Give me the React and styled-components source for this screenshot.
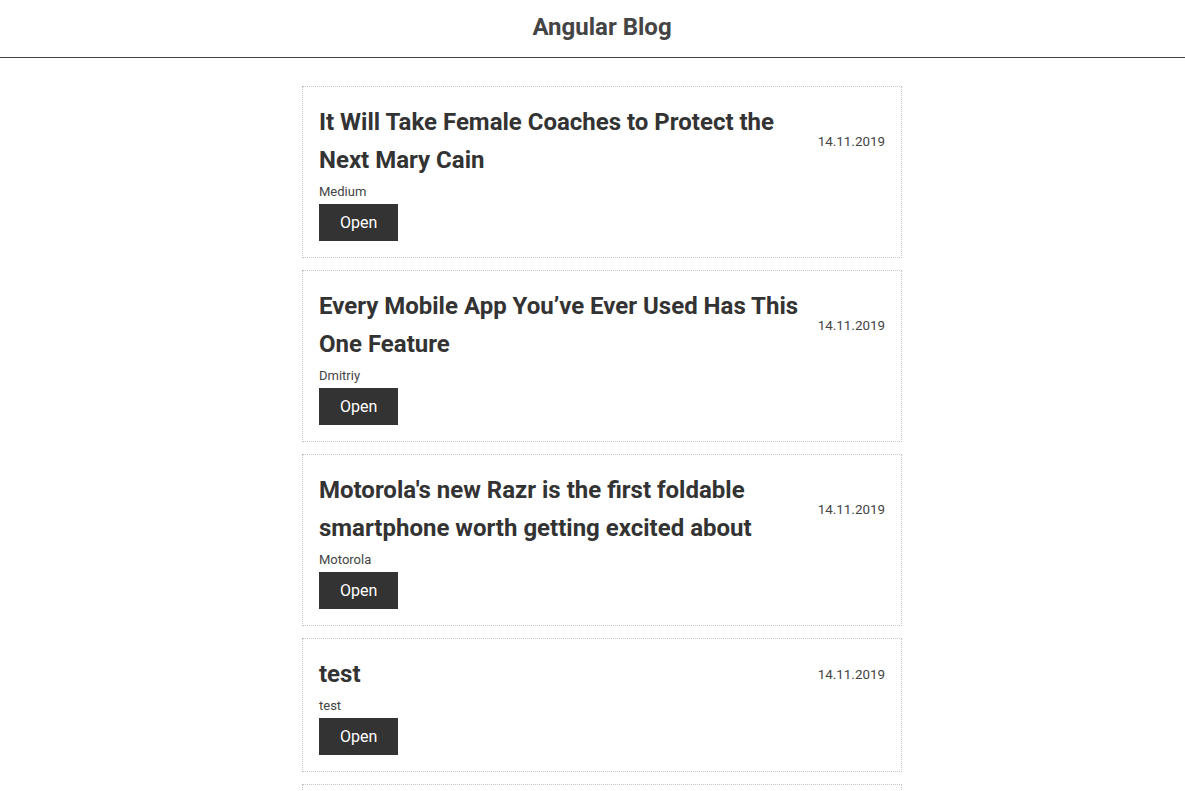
import React from 'react';
import styled, { createGlobalStyle } from 'styled-components';

const posts = [
    { title: 'It Will Take Female Coaches to Protect the Next Mary Cain', author: 'Medium', date: '14.11.2019' },
    { title: 'Every Mobile App You\u2019ve Ever Used Has This One Feature', author: 'Dmitriy', date: '14.11.2019' },
    { title: "Motorola's new Razr is the first foldable smartphone worth getting excited about", author: 'Motorola', date: '14.11.2019' },
    { title: 'test', author: 'test', date: '14.11.2019' },
    { title: 'Hello world', author: 'admin', date: '14.11.2019' },
]

const GlobalStyle = createGlobalStyle`
    * {
        box-sizing: border-box;
    }
    body {
        margin: 0;
        background: #fff;
        font-family: Roboto, 'Liberation Sans', sans-serif;
        color: #333;
        overflow-x: hidden;
    }
`

const App = () => {
    return (
        <>
            <GlobalStyle />
            <Header>
                <h1>Angular Blog</h1>
            </Header>
            <Content>
                <List>
                    {posts.map((post, i) => (
                        <Card key={i}>
                            <CardTop>
                                <Title>{post.title}</Title>
                                <PostDate>{post.date}</PostDate>
                            </CardTop>
                            <Author>{post.author}</Author>
                            <OpenButton type="button">Open</OpenButton>
                        </Card>
                    ))}
                </List>
            </Content>
        </>
    )
}

const Header = styled.header`
    height: 58px;
    padding-left: 19px;
    border-bottom: 1px solid #444;
    display: flex;
    align-items: center;
    justify-content: center;
    h1 {
        margin: 0 0 3px 0;
        font-size: 24px;
        font-weight: 700;
        color: #444;
    }
`

const Content = styled.main`
    padding: 28px 0 0 19px;
`

const List = styled.div`
    width: 600px;
    margin: 0 auto;
    display: flex;
    flex-direction: column;
    gap: 12px;
`

const Card = styled.div`
    border: 1px dotted #c4c4c4;
    padding: 16px;
    display: flex;
    flex-direction: column;
    align-items: flex-start;
`

const CardTop = styled.div`
    width: 100%;
    display: flex;
    align-items: center;
`

const Title = styled.h2`
    flex: 1;
    margin: 0;
    font-size: 24px;
    line-height: 38px;
    font-weight: 700;
    color: #333;
`

const PostDate = styled.span`
    font-size: 13.4px;
    color: #444;
`

const Author = styled.p`
    margin: 0;
    padding-top: 1px;
    font-size: 13px;
    line-height: 24px;
    color: #444;
`

const OpenButton = styled.button`
    height: 37px;
    padding: 0 21px;
    border: none;
    background: #333;
    color: #fff;
    font-family: Roboto, 'Liberation Sans', sans-serif;
    font-size: 16px;
    cursor: pointer;
`

export default App
